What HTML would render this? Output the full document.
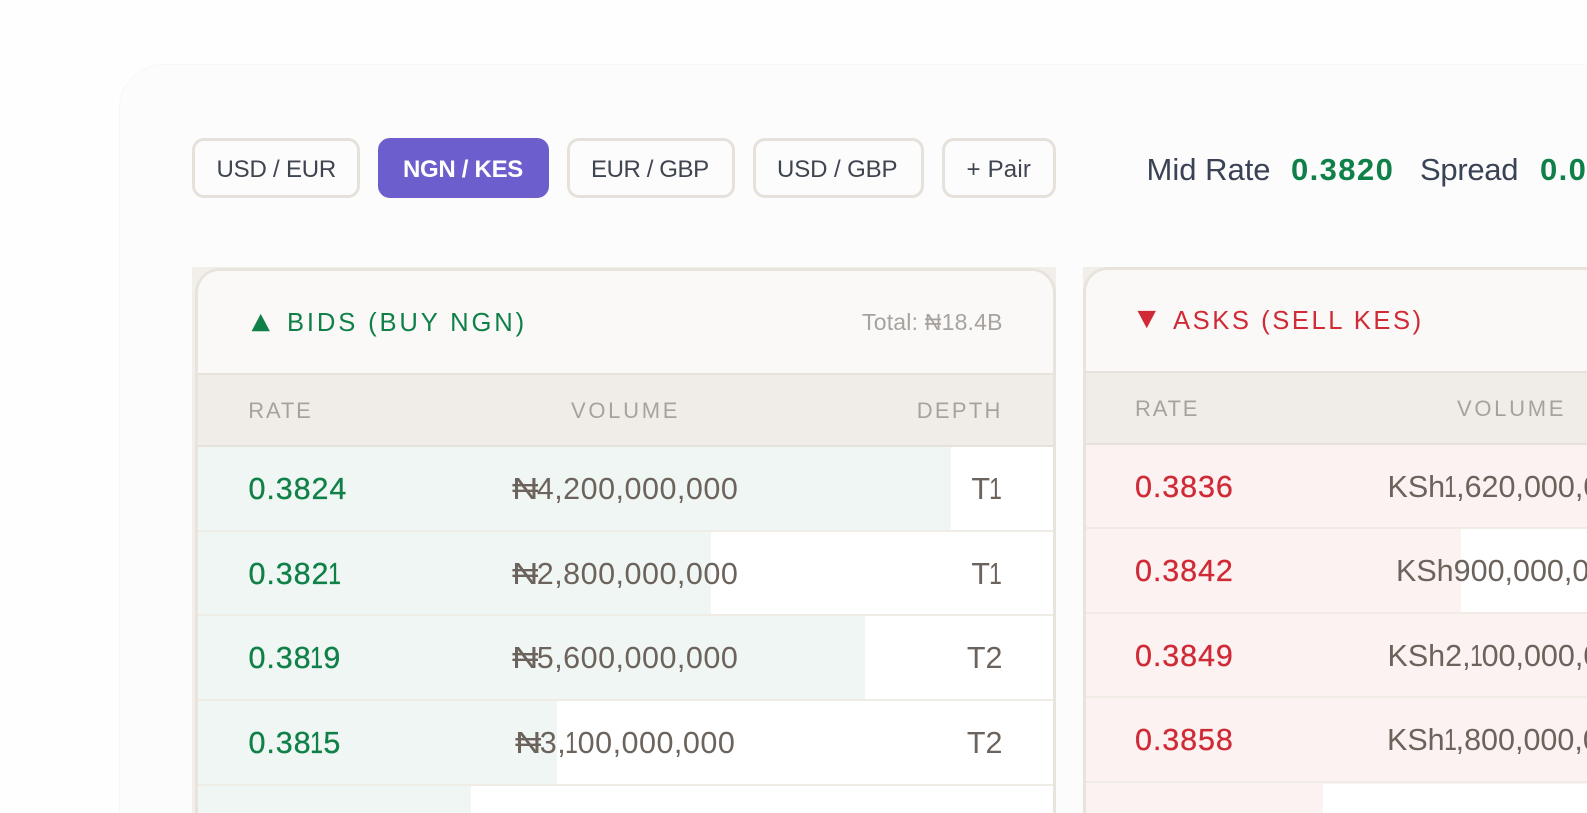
<!DOCTYPE html>
<html><head><meta charset="utf-8">
<style>
html,body{margin:0;padding:0;width:1587px;height:813px;overflow:hidden;background:#fff;font-family:"Liberation Sans",sans-serif}
#s{position:relative;width:1587px;height:813px;overflow:hidden;background:#fefefe}
#s div{position:absolute;box-sizing:border-box}
.t{white-space:nowrap;line-height:40px;height:40px}
.btn{top:138px;height:60px;border:3px solid #e6e1da;border-radius:12px;background:#fcfcfc}
.bt{top:150px;font-size:24px;color:#3f4550}
.th{font-size:22px;color:#a8a29e;letter-spacing:2.7px}
.g{color:#0f8048}.r{color:#cf2a36}
.rate{font-size:30.5px;letter-spacing:.9px;-webkit-text-stroke:.3px}
.vol{font-size:30.5px;color:#6b635c;letter-spacing:.5px;text-align:center}
.ask{letter-spacing:0;text-align:left}
.d{font-size:30.5px;color:#6b635c;text-align:right}
.line{height:2px;background:#efebe5}
.o{display:inline-block;transform:scaleX(.75);margin:0 -3px}
.n{display:inline-block;transform:scaleX(1.2);transform-origin:left center;margin-right:2.5px}
.tri{font-size:24px;font-family:"DejaVu Sans",sans-serif;transform:scaleY(.95)}
</style></head><body>
<div id="s">
<div style="left:119px;top:64px;width:1468px;height:749px;background:#fcfcfc;border-radius:44px 0 0 0;border:1px solid #f7f7f6;border-right:0;border-bottom:0"></div>

<div class="btn" style="left:192px;width:168px"></div>
<div class="btn" style="left:378px;width:171px;background:#6c5fcd;border-color:#6c5fcd"></div>
<div class="btn" style="left:567px;width:168px"></div>
<div class="btn" style="left:753px;width:171px"></div>
<div class="btn" style="left:942px;width:114px"></div>
<div class="t bt" style="left:216.5px;letter-spacing:-.2px">USD / EUR</div>
<div class="t bt" style="left:403px;color:#fff;font-weight:700;letter-spacing:-.3px">NGN / KES</div>
<div class="t bt" style="left:591px;letter-spacing:-.4px">EUR / GBP</div>
<div class="t bt" style="left:777px;letter-spacing:-.1px">USD / GBP</div>
<div class="t bt" style="left:966.5px;letter-spacing:.2px">+ Pair</div>

<div class="t" style="left:1146.5px;top:150px;font-size:31px;color:#3a4256">Mid Rate</div>
<div class="t g" style="left:1291px;top:150px;font-size:31px;font-weight:700;letter-spacing:1.4px">0.3820</div>
<div class="t" style="left:1420px;top:150px;font-size:31px;color:#3a4256;letter-spacing:-.3px">Spread</div>
<div class="t g" style="left:1540px;top:150px;font-size:31px;font-weight:700;letter-spacing:1.4px">0.0016</div>

<!-- BIDS -->
<div style="left:192px;top:267px;width:864px;height:546px;background:#f2efea"></div>
<div style="left:195px;top:267.7px;width:861px;height:546px;background:#fff;border:3px solid #e8e3dc;border-bottom:0;border-radius:25px 25px 0 0;overflow:hidden">
  <div style="left:0;top:0;width:855px;height:103px;background:#faf9f7"></div>
  <div style="left:0;top:102px;width:855px;height:74.5px;background:#f0ede8;border-top:2px solid #e6e1da;border-bottom:2px solid #e6e1da"></div>
  <div style="left:0;top:176.5px;width:753px;height:84px;background:#f0f6f3"></div>
  <div style="left:0;top:260.5px;width:512.5px;height:85px;background:#f0f6f3"></div>
  <div style="left:0;top:345.5px;width:667px;height:85px;background:#f0f6f3"></div>
  <div style="left:0;top:430.5px;width:359px;height:85px;background:#f0f6f3"></div>
  <div style="left:0;top:515.5px;width:273px;height:45px;background:#f0f6f3"></div>
  <div class="line" style="left:0;top:259px;width:855px"></div>
  <div class="line" style="left:0;top:343.5px;width:855px"></div>
  <div class="line" style="left:0;top:428.2px;width:855px"></div>
  <div class="line" style="left:0;top:513.2px;width:855px"></div>
</div>
<div class="t g tri" style="left:251.5px;top:301px">▲</div>
<div class="t g" style="left:287px;top:303px;font-size:25.6px;letter-spacing:2.85px">BIDS (BUY NGN)</div>
<div class="t" style="left:862px;top:302px;font-size:23px;color:#a8a29e;letter-spacing:.2px">Total: ₦18.4B</div>
<div class="t th" style="left:248.3px;top:391px;letter-spacing:1.8px">RATE</div>
<div class="t th" style="left:571px;top:391px">VOLUME</div>
<div class="t th" style="left:916.7px;top:391px;letter-spacing:2.3px">DEPTH</div>

<div class="t rate g" style="left:248.5px;top:469px">0.3824</div>
<div class="t vol" style="left:425px;width:400px;top:469px"><span class="n">₦</span>4,200,000,000</div>
<div class="t d" style="left:901px;width:100px;top:469px">T<span class="o">1</span></div>
<div class="t rate g" style="left:248.5px;top:553.7px">0.382<span class="o">1</span></div>
<div class="t vol" style="left:425px;width:400px;top:553.7px"><span class="n">₦</span>2,800,000,000</div>
<div class="t d" style="left:901px;width:100px;top:553.7px">T<span class="o">1</span></div>
<div class="t rate g" style="left:248.5px;top:638.2px">0.38<span class="o">1</span>9</div>
<div class="t vol" style="left:425px;width:400px;top:638.2px"><span class="n">₦</span>5,600,000,000</div>
<div class="t d" style="left:902.5px;width:100px;top:638.2px">T2</div>
<div class="t rate g" style="left:248.5px;top:722.7px">0.38<span class="o">1</span>5</div>
<div class="t vol" style="left:425px;width:400px;top:722.7px"><span class="n">₦</span>3,<span class="o">1</span>00,000,000</div>
<div class="t d" style="left:902.5px;width:100px;top:722.7px">T2</div>

<!-- ASKS -->
<div style="left:1083px;top:267px;width:504px;height:546px;background:#f2efea"></div>
<div style="left:1083px;top:267px;width:504px;height:546px;background:#fff;border:3px solid #e8e3dc;border-right:0;border-bottom:0;border-radius:25px 0 0 0;overflow:hidden">
  <div style="left:0;top:0;width:501px;height:102px;background:#faf9f7"></div>
  <div style="left:0;top:100.5px;width:501px;height:74px;background:#f0ede8;border-top:2px solid #e6e1da;border-bottom:2px solid #e6e1da"></div>
  <div style="left:0;top:174.5px;width:501px;height:84px;background:#fcf2f1"></div>
  <div style="left:0;top:258.5px;width:375px;height:85px;background:#fcf2f1"></div>
  <div style="left:0;top:343.5px;width:501px;height:85px;background:#fcf2f1"></div>
  <div style="left:0;top:428.5px;width:501px;height:85px;background:#fcf2f1"></div>
  <div style="left:0;top:513.5px;width:237px;height:45px;background:#fcf2f1"></div>
  <div class="line" style="left:0;top:257px;width:501px"></div>
  <div class="line" style="left:0;top:341.5px;width:501px"></div>
  <div class="line" style="left:0;top:426.2px;width:501px"></div>
  <div class="line" style="left:0;top:511.2px;width:501px"></div>
</div>
<div class="t r tri" style="left:1137.5px;top:298px">▼</div>
<div class="t r" style="left:1173px;top:301px;font-size:25.6px;letter-spacing:2.55px">ASKS (SELL KES)</div>
<div class="t th" style="left:1135px;top:389px;letter-spacing:1.8px">RATE</div>
<div class="t th" style="left:1457px;top:389px">VOLUME</div>

<div class="t rate r" style="left:1135px;top:466.5px">0.3836</div>
<div class="t vol ask" style="left:1387.5px;top:466.5px">KSh<span class="o">1</span>,620,000,000</div>
<div class="t rate r" style="left:1135px;top:551.2px">0.3842</div>
<div class="t vol ask" style="left:1396px;top:551.2px">KSh900,000,000</div>
<div class="t rate r" style="left:1135px;top:635.7px">0.3849</div>
<div class="t vol ask" style="left:1387.5px;top:635.7px">KSh2,<span class="o">1</span>00,000,000</div>
<div class="t rate r" style="left:1135px;top:720.2px">0.3858</div>
<div class="t vol ask" style="left:1387px;top:720.2px">KSh<span class="o">1</span>,800,000,000</div>
</div>
</body></html>
